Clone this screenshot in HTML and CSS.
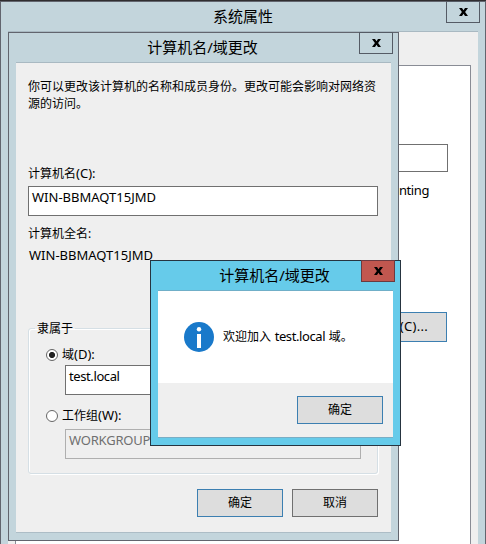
FILE: index.html
```html
<!DOCTYPE html>
<html lang="zh-CN">
<head>
<meta charset="utf-8">
<title>系统属性</title>
<link rel="stylesheet" href="styles.css">
</head>
<body>
<main class="desktop">
  <section class="window properties">
    <header class="titlebar"><h1>系统属性</h1><button class="close" aria-label="关闭"><svg viewBox="0 0 9 8"><path d="M0 0h3l1.5 2.2L6 0h3L6.1 4 9 8H6L4.5 5.8 3 8H0l2.9-4z"/></svg></button></header>
    <div class="client">
      <div class="tab-page">
        <div class="field description"></div>
        <p class="example">Accounting</p>
        <button class="button primary change">更改<span class="key">(C)...</span></button>
      </div>
    </div>
  </section>

  <section class="window rename">
    <header class="titlebar"><h1>计算机名/域更改</h1><button class="close" aria-label="关闭"><svg viewBox="0 0 9 8"><path d="M0 0h3l1.5 2.2L6 0h3L6.1 4 9 8H6L4.5 5.8 3 8H0l2.9-4z"/></svg></button></header>
    <div class="client">
      <p class="intro">你可以更改该计算机的名称和成员身份。更改可能会影响对网络资源的访问。</p>
      <div class="label">计算机名<span class="key">(C):</span></div>
      <div class="field"><span class="value">WIN-BBMAQT15JMD</span></div>
      <div class="label full-label">计算机全名:</div>
      <div class="full-name"><span class="value">WIN-BBMAQT15JMD</span></div>
      <fieldset class="group">
        <legend>隶属于</legend>
        <div class="option"><span class="radio checked"></span><span>域<span class="key">(D):</span></span></div>
        <div class="field"><span class="domain">test.local</span></div>
        <div class="option second"><span class="radio"></span><span>工作组<span class="key">(W):</span></span></div>
        <div class="field disabled"><span class="workgroup">WORKGROUP</span></div>
      </fieldset>
      <div class="actions">
        <button class="button primary">确定</button>
        <button class="button">取消</button>
      </div>
    </div>
  </section>

  <section class="window message">
    <header class="titlebar"><h1>计算机名/域更改</h1><button class="close" aria-label="关闭"><svg viewBox="0 0 9 8"><path d="M0 0h3l1.5 2.2L6 0h3L6.1 4 9 8H6L4.5 5.8 3 8H0l2.9-4z"/></svg></button></header>
    <div class="client">
      <div class="notice">
        <svg class="info" viewBox="0 0 30 30"><circle cx="15" cy="15" r="15" fill="#1979ca"/><circle cx="15" cy="7.2" r="2.2" fill="#fff"/><path d="M13 12h4v14h-4z" fill="#fff"/></svg>
        <p>欢迎加入 <span class="domain">test.local</span> 域。</p>
      </div>
      <div class="footer"><button class="button primary">确定</button></div>
    </div>
  </section>
</main>
</body>
</html>
```

FILE: styles.css
```css
* { box-sizing: border-box; }
body {
  margin: 0;
  color: #000;
  font: 12px/17px "Noto Sans", "Noto Sans CJK SC", sans-serif;
}
h1, p { margin: 0; font-weight: 400; }
.desktop {
  position: relative;
  width: 486px;
  height: 544px;
  overflow: hidden;
  background: #302d30;
}

/* Window frames */
.window {
  position: absolute;
  display: flex;
  flex-direction: column;
  padding: 0 7px 7px;
  border: 1px solid #62656e;
  background: #c3d5dc;
}
.properties { left: 0; top: 1px; width: 486px; height: 560px; }
.rename { left: 8px; top: 32px; width: 391px; height: 509px; }
.message {
  left: 150px;
  top: 260px;
  width: 251px;
  height: 186px;
  border-color: #263440;
  background: #66cbea;
}
.titlebar {
  position: relative;
  flex: none;
  height: 30px;
  border-bottom: 1px solid #a9b9c2;
}
.message .titlebar { border-color: #70afc8; }
.titlebar h1 {
  font-size: 15px;
  line-height: 29px;
  text-align: center;
}
.rename h1, .message h1 { padding-right: 2px; }
.close {
  position: absolute;
  right: -2px;
  top: -1px;
  display: flex;
  align-items: center;
  justify-content: center;
  width: 34px;
  height: 22px;
  padding: 0;
  border: 1px solid #555b65;
  background: transparent;
}
.close svg { width: 9px; height: 8px; }
.message .close { background: #c1574f; border-color: #6b3a40; }
.client {
  flex: 1;
  min-height: 0;
  background: #efefef;
  border-bottom: 1px solid #adbdc6;
}

/* Shared controls */
.field {
  height: 30px;
  padding: 2px 3px;
  border: 1px solid #707070;
  background: #fff;
  line-height: 17px;
}
.button {
  width: 86px;
  height: 28px;
  padding: 0 0 1px;
  border: 1px solid #707070;
  background: #ddd;
  color: #000;
  font: inherit;
}
.primary { border-color: #3c7fb1; }
.value { font-size: 13px; }
.domain { font-size: 13px; letter-spacing: -0.4px; }
.workgroup { font-size: 13px; letter-spacing: -0.2px; }
.key { font-size: 13px; }

/* System properties */
.properties .client { padding: 33px 7px 0; }
.tab-page {
  display: flex;
  flex-direction: column;
  align-items: flex-end;
  height: 500px;
  padding: 78px 22px 0 0;
  border: 1px solid #898c95;
  background: #fff;
}
.description { width: 300px; height: 28px; }
.example { margin: 10px 19px 0 0; font-size: 13px; letter-spacing: -0.4px; }
.change { width: 100px; height: 30px; margin: 113px 1px 0 0; padding-left: 10px; }
.change .key { letter-spacing: 0.3px; }

/* Rename dialog */
.rename .client { padding: 15px 13px 0 12px; }
.intro { width: 350px; height: 34px; }
.label { margin-top: 53px; height: 17px; }
.label + .field { margin-top: 4px; }
.full-label { margin-top: 9px; }
.full-name { padding-left: 1px; margin-top: 5px; height: 17px; }
.group {
  height: 154px;
  margin: 56px 0 0;
  padding: 9px 16px 0 17px;
  border: 1px solid #d5dfe5;
  border-radius: 3px;
  box-shadow: 1px 1px 0 #fff, inset 1px 1px 0 #fff;
}
.group legend { padding: 0 2px; margin-left: -11px; height: 17px; }
.option { display: flex; align-items: center; gap: 4px; height: 17px; }
.radio {
  width: 12px;
  height: 12px;
  border: 1px solid #666;
  border-radius: 50%;
  background: #fff;
}
.checked { background: radial-gradient(circle, #222 0 2.7px, #fff 3.4px); }
.group .field { margin: 2px 0 0 19px; }
.group .second { margin-top: 12px; }
.group .field.disabled {
  margin-top: 5px;
  border-color: #afafaf;
  background: transparent;
  color: #707070;
}
.actions { display: flex; justify-content: flex-end; gap: 9px; margin-top: 15px; }

/* Confirmation message */
.message .client { display: flex; flex-direction: column; border-color: #7aaec5; }
.notice {
  display: flex;
  align-items: center;
  gap: 9px;
  height: 92px;
  padding-left: 26px;
  background: #fff;
}
.notice p { padding-bottom: 2px; word-spacing: 0.5px; }
.info { width: 30px; height: 30px; }
.footer { display: flex; justify-content: flex-end; padding: 13px 10px 0; }
```
